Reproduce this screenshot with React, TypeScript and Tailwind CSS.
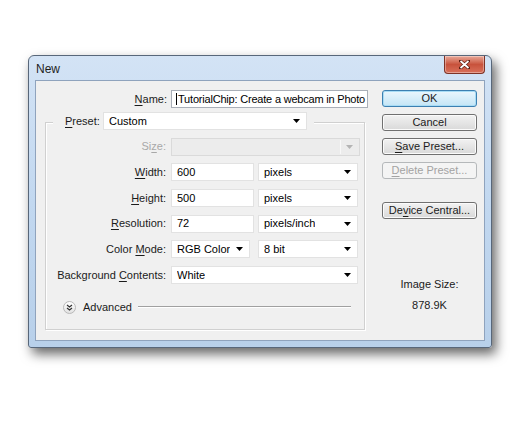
import React from "react";

const font = { fontFamily: '"Liberation Sans", Arial, sans-serif' };

function Arrow({ disabled }: { disabled?: boolean }) {
  return (
    <svg width="7" height="4" viewBox="0 0 7 4" className="shrink-0">
      <path d="M0 0h7L3.5 4z" fill={disabled ? "#b4b4b4" : "#000"} />
    </svg>
  );
}

function Label({ pre, u, post, disabled }: { pre: string; u: string; post: string; disabled?: boolean }) {
  return (
    <span className={disabled ? "text-[#a8a8a8]" : "text-[#1b1b1b]"}>
      {pre}
      <span className="underline underline-offset-2">{u}</span>
      {post}
    </span>
  );
}

function Select({ value, w, disabled }: { value?: string; w: string; disabled?: boolean }) {
  return (
    <div
      className={`${w} h-[18px] flex items-center justify-between pl-[5px] pr-[6px] border ${
        disabled ? "border-[#dadada] bg-[#ececec]" : "border-[#e2e2e2] bg-white"
      }`}
    >
      <span className="truncate">{value}</span>
      {disabled ? (
        <div className="flex items-center h-full">
          <div className="w-px h-[14px] bg-[#f8f8f8] mr-[5px]" />
          <Arrow disabled />
        </div>
      ) : (
        <Arrow />
      )}
    </div>
  );
}

function Input({ value, w }: { value: string; w: string }) {
  return (
    <div className={`${w} h-[18px] flex items-center pl-[5px] border border-[#e2e2e2] bg-white`}>{value}</div>
  );
}

function Row({ label, children }: { label: React.ReactNode; children: React.ReactNode }) {
  return (
    <div className="flex items-center h-[18px]">
      <div className="w-[121px] text-right pr-[1px]">{label}</div>
      <div className="ml-[4px] flex gap-[4px]">{children}</div>
    </div>
  );
}

function Button({ children, primary, disabled, className = "" }: { children: React.ReactNode; primary?: boolean; disabled?: boolean; className?: string }) {
  return (
    <div
      className={`h-[17px] w-[95px] flex items-center justify-center rounded-[3px] border ${
        primary
          ? "border-[#3c7fb1] bg-gradient-to-b from-[#eaf6fd] to-[#c4e5f6] shadow-[inset_0_0_0_1px_#a8dcf5]"
          : disabled
          ? "border-[#b5b8ba] bg-[#f4f4f4] text-[#a3a3a3]"
          : "border-[#707070] bg-gradient-to-b from-[#f2f2f2] to-[#d9d9d9] shadow-[inset_0_0_0_1px_#fbfbfb]"
      } ${className}`}
    >
      {children}
    </div>
  );
}

export default function App() {
  return (
    <div className="min-h-screen bg-white pt-[55px] pl-[28px] text-[11px] leading-[13px]" style={font}>
      <div className="w-[464px] h-[293px] flex flex-col rounded-t-[6px] rounded-b-[3px] border border-[#58677a] bg-gradient-to-b from-[#d3e3f5] via-[#c2d8f0] to-[#b8d0ea] shadow-[4px_6px_12px_rgba(0,0,0,0.6)]">
        <div className="h-[24px] flex items-start justify-between pl-[7px]">
          <span className="mt-[6px] text-[12px] leading-[14px] text-[#1e1e1e]">New</span>
          <div className="mr-[6px] w-[41px] h-[18px] flex items-center justify-center rounded-b-[4px] border border-t-0 border-[#7e3326] bg-gradient-to-b from-[#e8a898] via-[#c8523c] to-[#d9705a] shadow-[inset_0_0_0_1px_rgba(255,255,255,0.35)]">
            <svg width="11" height="9" viewBox="0 0 11 9">
              <path d="M1.5 1l8 7M9.5 1l-8 7" stroke="#5a1d12" strokeWidth="3.2" strokeLinecap="square" />
              <path d="M1.5 1l8 7M9.5 1l-8 7" stroke="#fff" strokeWidth="1.8" />
            </svg>
          </div>
        </div>
        <div className="mx-[6px] mb-[6px] flex-1 flex border border-[#8fa3bd] bg-[#f0f0f0]">
          {/* left column */}
          <div className="w-[346px] flex flex-col">
            <div className="mt-[9px] flex items-center h-[18px]">
              <div className="w-[131px] text-right">
                <Label pre="" u="N" post="ame:" />
              </div>
              <div className="ml-[4px] w-[197px] h-[18px] flex items-center pl-[4px] border border-[#a9afb8] bg-white overflow-hidden whitespace-nowrap tracking-[-0.2px]">
                <span className="w-px h-[12px] bg-black mr-[1px] shrink-0" />
                TutorialChip: Create a webcam in Photo
              </div>
            </div>

            <div className="ml-[9px] mt-[14px] w-[320px] h-[208px] border border-[#d0d0d0] shadow-[inset_1px_1px_0_#ffffff,1px_1px_0_#ffffff] flex flex-col">
              <div className="-mt-[11px] flex flex-col gap-[7.7px]">
                <div className="flex items-center h-[18px] ml-[7px] w-fit bg-[#f0f0f0] pl-[12px] pr-[7px]">
                  <div className="w-[36px]">
                    <Label pre="" u="P" post="reset:" />
                  </div>
                  <div className="ml-[2px]">
                    <Select value="Custom" w="w-[204px]" />
                  </div>
                </div>
                <Row label={<Label pre="Si" u="z" post="e:" disabled />}>
                  <Select w="w-[189px]" disabled />
                </Row>
                <Row label={<Label pre="" u="W" post="idth:" />}>
                  <Input value="600" w="w-[83px]" />
                  <Select value="pixels" w="w-[100px]" />
                </Row>
                <Row label={<Label pre="" u="H" post="eight:" />}>
                  <Input value="500" w="w-[83px]" />
                  <Select value="pixels" w="w-[100px]" />
                </Row>
                <Row label={<Label pre="" u="R" post="esolution:" />}>
                  <Input value="72" w="w-[83px]" />
                  <Select value="pixels/inch" w="w-[100px]" />
                </Row>
                <Row label={<Label pre="Color " u="M" post="ode:" />}>
                  <Select value="RGB Color" w="w-[79px]" />
                  <div className="ml-[4px]">
                    <Select value="8 bit" w="w-[100px]" />
                  </div>
                </Row>
                <Row label={<Label pre="Background " u="C" post="ontents:" />}>
                  <Select value="White" w="w-[187px]" />
                </Row>
              </div>
              <div className="mt-[16px] flex items-center h-[14px] ml-[17px]">
                <div className="w-[13px] h-[13px] rounded-full border border-[#b9b9b9] bg-gradient-to-b from-white to-[#e2e2e2] flex items-center justify-center">
                  <svg width="7" height="7" viewBox="0 0 7 7">
                    <path d="M1 1l2.5 2 2.5-2M1 4l2.5 2 2.5-2" stroke="#333" strokeWidth="1.2" fill="none" />
                  </svg>
                </div>
                <span className="ml-[7px] text-[#1b1b1b]">Advanced</span>
                <div className="ml-[6px] w-[213px] h-[2px] border-t border-[#a0a0a0] border-b border-b-white" />
              </div>
            </div>
          </div>

          {/* right column */}
          <div className="w-[95px] mt-[9px] flex flex-col text-[#1b1b1b]">
            <Button primary>OK</Button>
            <Button className="mt-[7px]">Cancel</Button>
            <Button className="mt-[7px]">
              <Label pre="" u="S" post="ave Preset..." />
            </Button>
            <Button className="mt-[7px]" disabled>
              <span>
                <span className="underline underline-offset-2">D</span>elete Preset...
              </span>
            </Button>
            <Button className="mt-[23px]">
              <Label pre="De" u="v" post="ice Central..." />
            </Button>
            <div className="mt-[59px] text-center">Image Size:</div>
            <div className="mt-[8px] text-center">878.9K</div>
          </div>
        </div>
      </div>
    </div>
  );
}
